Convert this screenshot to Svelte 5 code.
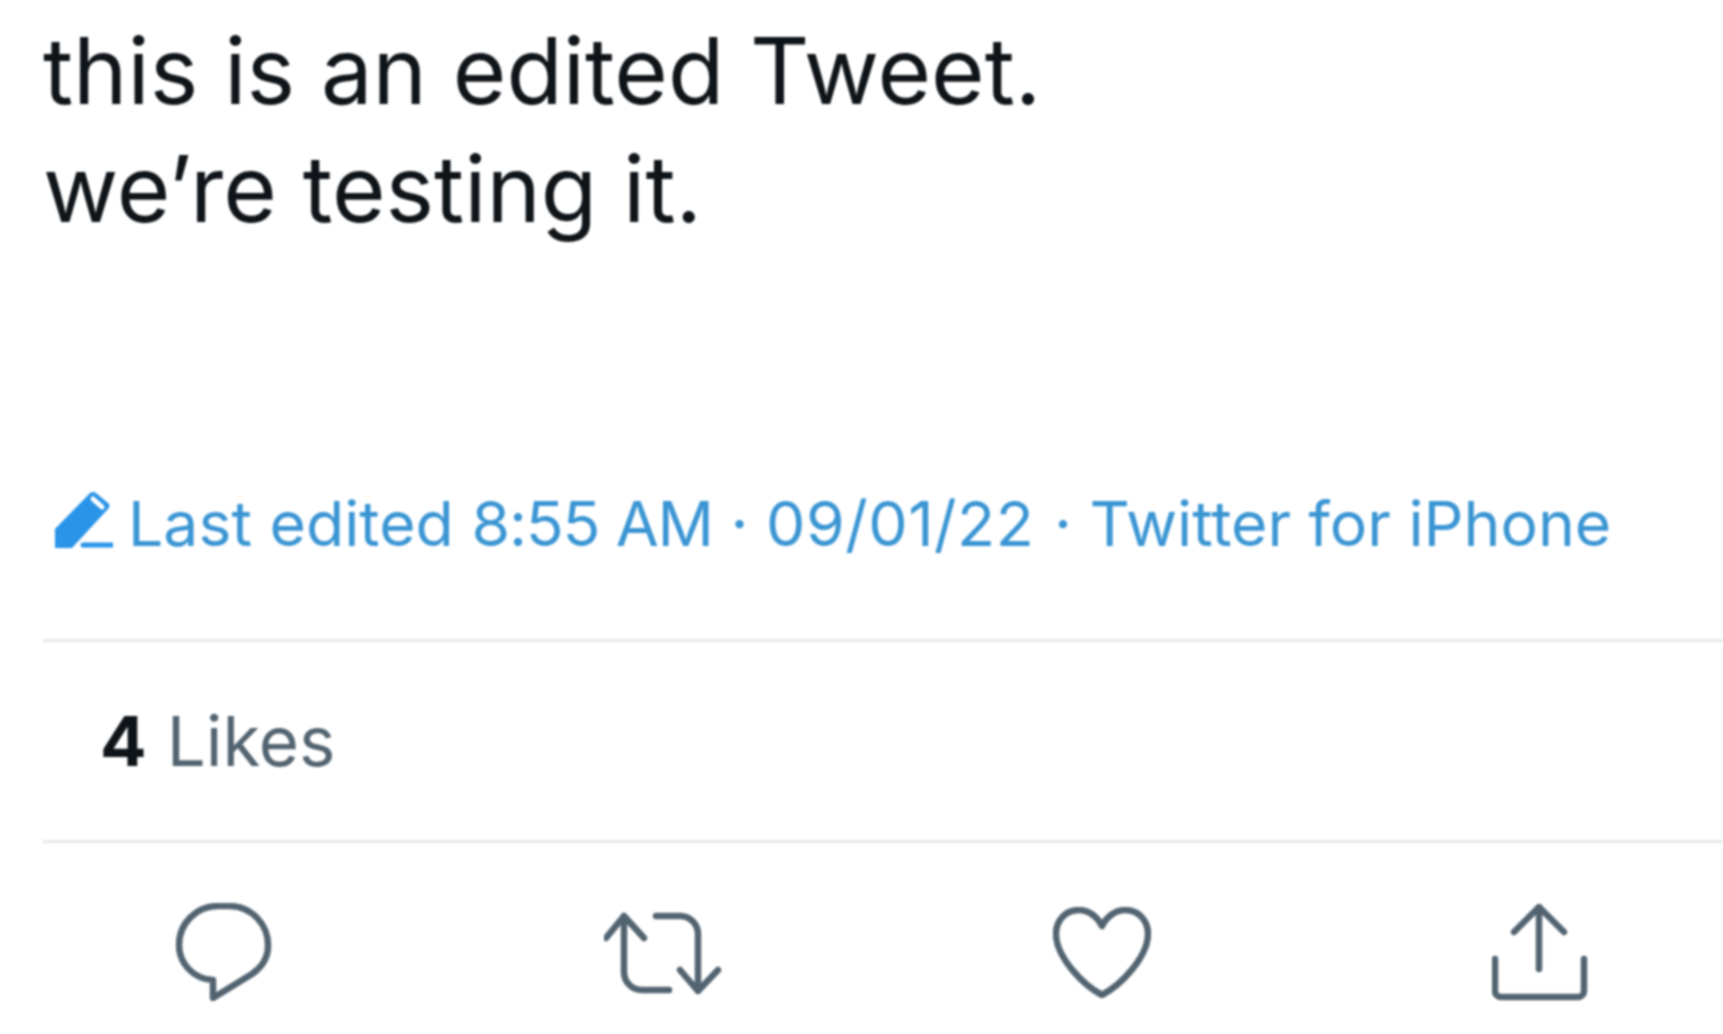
<script>
  const actions = [
    { name: 'reply', w: 96, h: 98, body: 'M42 3H54A39 39 0 0 1 92 43C92 55 86 64 76 71L37 95V77C17 76 3 60 3 42A39 39 0 0 1 42 3Z' },
    { name: 'retweet', w: 118, h: 88, body: 'M2 30L20 8L40 30M20 8V64A18 18 0 0 0 38 82H65M52 8H76A18 18 0 0 1 94 26V83M76 62L94 83L114 62' },
    { name: 'like', w: 98, h: 91, body: 'M49 19C44 9 35 3 26 3C12 3 3 14 3 27C3 50 30 78 49 88C68 78 95 50 95 27C95 14 86 3 72 3C63 3 54 9 49 19Z' },
    { name: 'share', w: 97, h: 97, body: 'M22 28L47 3L72 28M47 3V65M3 55V87A6 6 0 0 0 9 93H86A6 6 0 0 0 92 87V55' }
  ];
</script>

<main class="tweet">
  <p class="body">this is an edited Tweet.<br />we’re testing it.</p>

  <div class="meta">
    <svg class="pencil" width="58" height="58" viewBox="0 0 58 58" aria-hidden="true">
      <path class="pencil-body" d="M0 57V38L35 2Q38 0 41 2L53 12Q56 15 53 18L17 57Z" />
      <path class="pencil-slit" d="M38 8L47 16" />
      <path class="pencil-line" d="M28 54H57" />
    </svg>
    <span>Last edited <span class="time">8:55 AM</span> · <span class="date">09/01/22</span> · Twitter for iPhone</span>
  </div>

  <div class="likes"><b>4</b> <span>Likes</span></div>

  <div class="actions">
    {#each actions as a}
      <div class="action">
        <svg width={a.w} height={a.h} viewBox="0 0 {a.w} {a.h}" aria-label={a.name}>
          <path d={a.body} />
        </svg>
      </div>
    {/each}
  </div>
</main>

<style>
  :global(body) {
    margin: 0;
    background: #fff;
  }
  .tweet {
    width: 1723px;
    height: 1034px;
    box-sizing: border-box;
    padding-left: 43px;
    overflow: hidden;
    font-family: Inter, "Noto Sans", sans-serif;
    filter: blur(0.8px);
  }
  .body {
    margin: 0;
    padding-top: 12px;
    height: 462px;
    box-sizing: border-box;
    font-size: 92px;
    line-height: 118px;
    color: #0f1419;
  }
  .meta {
    display: flex;
    align-items: center;
    gap: 15px;
    height: 180px;
    box-sizing: border-box;
    padding-left: 12px;
    padding-bottom: 56px;
    font-size: 62.5px;
    color: #3a95d3;
    border-bottom: 3px solid #e6e8ea;
    white-space: nowrap;
  }
  .time {
    letter-spacing: -1.2px;
  }
  .date {
    letter-spacing: 0.5px;
    margin-right: 2px;
  }
  .pencil {
    margin-bottom: 6px;
  }
  .pencil-body {
    fill: #2a94e8;
  }
  .pencil-slit {
    stroke: #fff;
    stroke-width: 5;
    fill: none;
    stroke-linecap: round;
  }
  .pencil-line {
    stroke: #2a94e8;
    stroke-width: 5;
    fill: none;
    stroke-linecap: round;
  }
  .likes {
    display: flex;
    align-items: center;
    gap: 20px;
    height: 201px;
    box-sizing: border-box;
    padding-left: 57px;
    font-size: 69px;
    color: #536471;
    border-bottom: 3px solid #e6e8ea;
  }
  .likes b {
    color: #0f1419;
    font-weight: 700;
  }
  .actions {
    display: grid;
    grid-template-columns: repeat(4, 439px);
    margin-left: -39px;
    height: 190px;
    align-items: start;
    padding-top: 59px;
    box-sizing: border-box;
  }
  .action {
    display: flex;
    justify-content: center;
    height: 100px;
    align-items: center;
  }
  .action path {
    fill: none;
    stroke: #536471;
    stroke-width: 6.5;
    stroke-linecap: round;
    stroke-linejoin: round;
  }
</style>
